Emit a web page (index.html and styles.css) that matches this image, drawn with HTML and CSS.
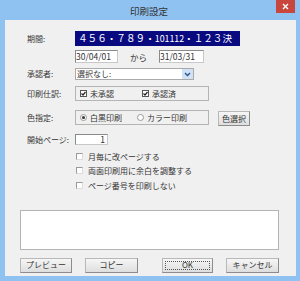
FILE: index.html
```html
<!DOCTYPE html>
<html lang="ja">
<head>
    <meta charset="UTF-8">
    <title>印刷設定</title>
    <link rel="stylesheet" href="styles.css">
</head>
<body>
    <div class="window">
        <div class="titlebar">
            <span></span>
            <span class="title">印刷設定</span>
            <span class="close">
                <svg width="7" height="7" viewBox="0 0 7 7"><path d="M1 1 L6 6 M6 1 L1 6" stroke="#fff" stroke-width="1.4"/></svg>
            </span>
        </div>

        <div class="client">
            <div class="form">
                <div class="row">
                    <span class="label">期間:</span>
                    <div class="period">４５６・７８９・<span class="half">101112</span>・１２３決</div>
                </div>
                <div class="dates">
                    <div class="input date1">30/04/01</div>
                    <span class="kara">から</span>
                    <div class="input date2">31/03/31</div>
                </div>

                <div class="row approver">
                    <span class="label">承認者:</span>
                    <div class="select">
                        <span class="select-text">選択なし:</span>
                        <span class="arrow">
                            <svg width="7" height="5" viewBox="0 0 7 5"><path d="M1 1 L3.5 3.5 L6 1" stroke="#2c4e8c" stroke-width="1.3" fill="none"/></svg>
                        </span>
                    </div>
                </div>

                <div class="row print-group">
                    <span class="label">印刷仕訳:</span>
                    <div class="group">
                        <span class="opt opt-check"><span class="box checked"></span>未承認</span>
                        <span class="opt opt-check"><span class="box checked"></span>承認済</span>
                    </div>
                </div>

                <div class="row color-group">
                    <span class="label">色指定:</span>
                    <div class="group">
                        <span class="opt opt-radio"><span class="radio on"></span>白黒印刷</span>
                        <span class="opt opt-radio"><span class="radio"></span>カラー印刷</span>
                    </div>
                    <button class="btn color-btn">色選択</button>
                </div>

                <div class="row start-page">
                    <span class="label">開始ページ:</span>
                    <div class="input page">1</div>
                </div>

                <ul class="checks">
                    <li><span class="box"></span>月毎に改ページする</li>
                    <li><span class="box"></span>両面印刷用に余白を調整する</li>
                    <li><span class="box"></span>ページ番号を印刷しない</li>
                </ul>
            </div>

            <div class="memo"></div>

            <div class="buttons">
                <button class="btn b-preview">プレビュー</button>
                <button class="btn b-copy">コピー</button>
                <button class="btn b-ok"><span class="focus">OK</span></button>
                <button class="btn b-cancel">キャンセル</button>
            </div>
        </div>
    </div>
</body>
</html>
```
FILE: styles.css
```css
body {
    margin: 0;
    font-family: "Noto Sans CJK JP", "Noto Sans", sans-serif;
    font-size: 8px;
    color: #333;
    background-color: #fff;
}

.window {
    width: 300px;
    height: 281px;
    box-sizing: border-box;
    padding: 0 4px 5px 5px;
    background-color: #8fc2f1;
    display: flex;
    flex-direction: column;
}

.titlebar {
    height: 20px;
    display: grid;
    grid-template-columns: 1fr auto 1fr;
    margin-right: -3px;
}

.title {
    font-size: 9.5px;
    color: #333;
    line-height: 22px;
    margin-left: -6px;
}

.close {
    justify-self: end;
    width: 19px;
    height: 13px;
    margin-right: 4px;
    background-color: #c8463c;
    display: flex;
    align-items: center;
    justify-content: center;
}

.client {
    flex: 1;
    background-color: #f0f0f0;
    padding-top: 11px;
}

.form {
    padding-left: 22px;
}

.row {
    display: flex;
    align-items: center;
}

.label {
    width: 48px;
    flex-shrink: 0;
    line-height: 1;
}

.period {
    width: 165px;
    height: 15px;
    background-color: #0a0a80;
    color: #fff;
    font-size: 9.6px;
    line-height: 15px;
    padding-left: 3px;
    box-sizing: border-box;
    white-space: nowrap;
    overflow: hidden;
}

.half {
    font-size: 8.8px;
}

.dates {
    display: flex;
    align-items: center;
    margin: 3px 0 0 48px;
}

.input {
    height: 13px;
    box-sizing: border-box;
    background-color: #fff;
    border: 1px solid #c8c8c8;
    border-top-color: #8a8a8a;
    border-left-color: #8a8a8a;
    line-height: 11px;
    font-size: 8.5px;
    white-space: nowrap;
}

.date1 {
    width: 43px;
}

.date2 {
    width: 45px;
}

.kara {
    width: 41px;
    text-align: center;
    font-size: 8.5px;
    padding-top: 2px;
}

.approver {
    margin-top: 5px;
}

.select {
    width: 119px;
    height: 12px;
    box-sizing: border-box;
    background-color: #fff;
    border: 1px solid #aaa;
    display: flex;
}

.select-text {
    flex: 1;
    line-height: 10px;
    padding-left: 1px;
}

.arrow {
    width: 11px;
    background-color: #cfe2f6;
    display: flex;
    align-items: center;
    justify-content: center;
}

.print-group {
    margin-top: 6px;
}

.color-group {
    margin-top: 8px;
}

.group {
    width: 134px;
    height: 15px;
    box-sizing: border-box;
    border: 1px solid #b4b4b4;
    display: flex;
    align-items: center;
    padding-left: 4px;
}

.opt {
    display: flex;
    align-items: center;
    gap: 3px;
}

.opt-check {
    width: 62px;
}

.opt-radio {
    width: 57px;
}

.box {
    width: 7px;
    height: 7px;
    box-sizing: border-box;
    border: 1px solid #9a9a9a;
    border-right-color: #dcdcdc;
    border-bottom-color: #dcdcdc;
    background-color: #fff;
    display: inline-block;
}

.box.checked {
    border-color: #555;
    background: #fff url("data:image/svg+xml,%3Csvg xmlns='http://www.w3.org/2000/svg' width='5' height='5'%3E%3Cpath d='M0.5 2.5 L2 4 L4.5 1' stroke='%23222' stroke-width='1.2' fill='none'/%3E%3C/svg%3E") center no-repeat;
}

.radio {
    width: 7px;
    height: 7px;
    box-sizing: border-box;
    border: 1px solid #999;
    border-radius: 50%;
    background-color: #fff;
    display: inline-flex;
    align-items: center;
    justify-content: center;
}

.radio.on::after {
    content: "";
    width: 3px;
    height: 3px;
    border-radius: 50%;
    background-color: #333;
}

.btn {
    font-family: inherit;
    font-size: 8px;
    color: #333;
    height: 15px;
    padding: 0;
    box-sizing: border-box;
    border: 1px solid #b8b8b8;
    border-right-color: #8c8c8c;
    border-bottom-color: #8c8c8c;
    background: linear-gradient(#f6f6f6, #dedede);
    line-height: 1;
}

.color-btn {
    width: 32px;
    margin-left: 9px;
    margin-top: 2px;
}

.start-page {
    margin-top: 8px;
}

.page {
    width: 33px;
    height: 11px;
    line-height: 9px;
    text-align: right;
    padding-right: 2px;
}

.checks {
    list-style: none;
    margin: 4px 0 0 49px;
    padding: 0;
}

.checks li {
    height: 14.5px;
    display: flex;
    align-items: center;
    gap: 5px;
}

.memo {
    height: 40px;
    margin: 17px 17px 0 15px;
    background-color: #fff;
    border: 1px solid #b4b4b4;
    box-sizing: border-box;
}

.buttons {
    display: flex;
    margin-top: 8px;
    padding-left: 15px;
}

.b-preview {
    width: 52px;
}

.b-copy {
    width: 53px;
    margin-left: 13px;
}

.b-ok {
    width: 51px;
    margin-left: 24px;
    padding: 2px;
}

.b-cancel {
    width: 53px;
    margin-left: 13px;
}

.focus {
    display: flex;
    align-items: center;
    justify-content: center;
    height: 100%;
    border: 1px dotted #555;
    box-sizing: border-box;
}
```
